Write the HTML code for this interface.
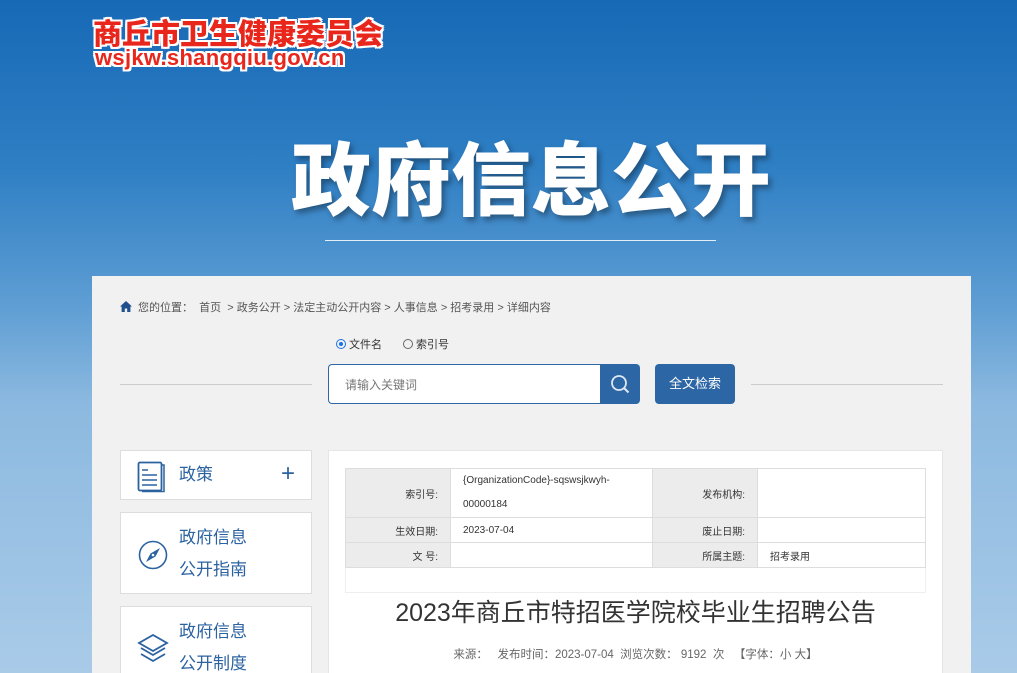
<!DOCTYPE html>
<html style="width:1017px;height:673px;overflow:hidden;background:#a9cbe8"><head><meta charset="utf-8"><style>
*{margin:0;padding:0;box-sizing:border-box}
body{width:1017px;height:673px;overflow:hidden;font-family:"Liberation Sans","Noto Sans CJK SC",sans-serif;background:linear-gradient(180deg,#1769b6 0%,#2f7fc4 25%,#5d9dd3 45%,#8cb9e0 60%,#a9cbe8 100%);position:relative}
.abs{position:absolute}
.logo1{left:93px;top:14px;font-size:29px;font-weight:900;color:#e8261b;text-shadow:-2px -2px 0 #fff,2px -2px 0 #fff,-2px 2px 0 #fff,2px 2px 0 #fff,0 2px 0 #fff,2px 0 0 #fff,-2px 0 0 #fff,0 -2px 0 #fff;font-family:"Noto Sans CJK SC",sans-serif;line-height:36px}
.logo2{left:95px;top:46px;font-size:22px;font-weight:700;color:#e8261b;letter-spacing:0.3px;text-shadow:-2px -2px 0 #fff,2px -2px 0 #fff,-2px 2px 0 #fff,2px 2px 0 #fff,0 2px 0 #fff,2px 0 0 #fff,-2px 0 0 #fff,0 -2px 0 #fff;line-height:24px}
.big{left:291px;top:125px;font-size:80px;font-weight:900;color:#fff;font-family:"Noto Sans CJK SC",sans-serif;line-height:100px;text-shadow:3px 4px 6px rgba(0,0,0,.35);letter-spacing:0px}
.hline{left:325px;top:240px;width:391px;height:1px;background:#e6eef7}
.panel{left:92px;top:276px;width:879px;height:420px;background:#f1f1f1}
.crumb{left:120px;top:300px;font-size:11px;color:#555;line-height:16px}
.radio{top:338px;font-size:11px;color:#333;line-height:14px}
.rc{display:inline-block;width:10px;height:10px;border:1px solid #666;border-radius:50%;vertical-align:-1px;margin-right:3px;position:relative}
.gl{top:384px;height:1px;background:#ccc}
.search{left:328px;top:364px;width:273px;height:40px;background:#fff;border:1px solid #2d67a6;border-right:none;border-radius:4px 0 0 4px;font-size:12px;color:#777;padding:11px 16px}
.sbtn{left:600px;top:364px;width:40px;height:40px;background:#2c66a5;border-radius:0 4px 4px 0}
.qbtn{left:655px;top:364px;width:80px;height:40px;background:#2c66a5;border-radius:4px;color:#fff;font-size:13px;text-align:center;line-height:40px}
.side{left:120px;width:192px;background:#fff;border:1px solid #ddd;color:#2b62a0;font-size:17px}
.content{left:328px;top:450px;width:615px;height:240px;background:#fff;border:1px solid #e6e6e6}
table{position:absolute;left:345px;top:468px;width:581px;border-collapse:collapse;font-size:10px;color:#333}
td{border:1px solid #ddd;height:25px;padding:0 12px}
td.l{background:#ececec;text-align:right;width:105px}
</style></head><body>
<div class="abs logo1">商丘市卫生健康委员会</div>
<div class="abs logo2">wsjkw.shangqiu.gov.cn</div>
<div class="abs big">政府信息公开</div>
<div class="abs hline"></div>
<div class="abs panel"></div>
<div class="abs crumb"><svg width="12" height="11" viewBox="0 0 12 11" style="vertical-align:-1px;margin-right:6px"><path d="M6 0L0 5.5h1.6V11h3.2V7.5h2.4V11h3.2V5.5H12z" fill="#1f4f8c"/></svg>您的位置：&nbsp;&nbsp;首页 &nbsp;&gt; 政务公开 &gt; 法定主动公开内容 &gt; 人事信息 &gt; 招考录用 &gt; 详细内容</div>
<div class="abs radio" style="left:336px"><span class="rc" style="border-color:#1a73e8"><span style="position:absolute;left:2px;top:2px;width:4px;height:4px;border-radius:50%;background:#1a73e8"></span></span>文件名</div>
<div class="abs radio" style="left:403px"><span class="rc"></span>索引号</div>
<div class="abs gl" style="left:120px;width:192px"></div>
<div class="abs gl" style="left:751px;width:192px"></div>
<div class="abs search">请输入关键词</div>
<div class="abs sbtn"><svg width="40" height="40" viewBox="0 0 40 40"><circle cx="19" cy="19" r="7" fill="none" stroke="#dfe8f3" stroke-width="1.8"/><path d="M24 24l4.5 4.5" stroke="#dfe8f3" stroke-width="2"/></svg></div>
<div class="abs qbtn">全文检索</div>
<div class="abs side" style="top:450px;height:50px"><svg class="abs" style="left:16px;top:10px" width="30" height="32" viewBox="0 0 30 32"><rect x="1.5" y="1.5" width="23" height="28" rx="1.5" fill="none" stroke="#2b62a0" stroke-width="1.8"/><path d="M24.5 4h2.5v26.5H5" fill="none" stroke="#2b62a0" stroke-width="1.5"/><path d="M5 9h6M5 14h15M5 19h15M5 24h15" stroke="#2b62a0" stroke-width="1.5"/></svg><span class="abs" style="left:58px;top:13px;line-height:22px">政策</span><span class="abs" style="left:160px;top:9px;font-size:24px;line-height:28px;font-weight:300">+</span></div>
<div class="abs side" style="top:512px;height:82px"><svg class="abs" style="left:16px;top:26px" width="32" height="32" viewBox="0 0 32 32"><circle cx="16" cy="16" r="13.5" fill="none" stroke="#2b62a0" stroke-width="1.6"/><path d="M23 9l-9.5 5.5L9 23l9.5-5.5z" fill="#2b62a0"/><circle cx="16" cy="16" r="1.3" fill="#fff"/></svg><span class="abs" style="left:58px;top:9px;line-height:32px">政府信息<br>公开指南</span></div>
<div class="abs side" style="top:606px;height:82px"><svg class="abs" style="left:16px;top:26px" width="32" height="32" viewBox="0 0 32 32"><path d="M16 2L2 10l14 8 14-8z" fill="none" stroke="#2b62a0" stroke-width="1.8"/><path d="M4 15l12 7 12-7M4 21l12 7 12-7" fill="none" stroke="#2b62a0" stroke-width="1.8"/></svg><span class="abs" style="left:58px;top:9px;line-height:32px">政府信息<br>公开制度</span></div>
<div class="abs content"></div>
<table>
<tr style="height:49px"><td class="l">索引号:</td><td style="width:202px;line-height:24px">{OrganizationCode}-sqswsjkwyh-<br>00000184</td><td class="l" style="width:104px">发布机构:</td><td></td></tr>
<tr><td class="l">生效日期:</td><td>2023-07-04</td><td class="l">废止日期:</td><td></td></tr>
<tr><td class="l">文 号:</td><td></td><td class="l">所属主题:</td><td>招考录用</td></tr>
<tr><td colspan="4" style="border-color:#eee"></td></tr>
</table>
<div class="abs" style="left:328px;width:615px;top:595px;text-align:center;font-size:25px;color:#333;line-height:36px">2023年商丘市特招医学院校毕业生招聘公告</div>
<div class="abs" style="left:328px;width:615px;top:647px;text-align:center;font-size:11.5px;color:#666;line-height:16px">来源：&nbsp;&nbsp;&nbsp;发布时间：2023-07-04 &nbsp;浏览次数：&nbsp;9192 &nbsp;次 &nbsp;&nbsp;【字体：小 大】</div>
</body></html>
